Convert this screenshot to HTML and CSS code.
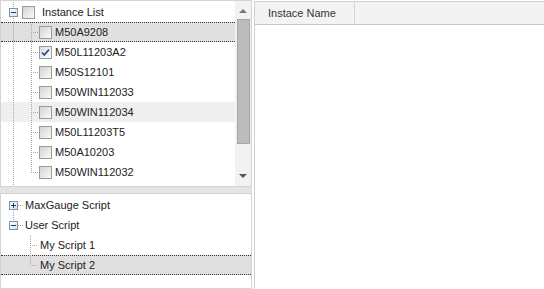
FILE: index.html
```html
<!DOCTYPE html>
<html lang="en">
<head>
    <meta charset="UTF-8">
    <title>Instance List</title>
    <link rel="stylesheet" href="styles.css">
</head>
<body>
    <div class="layout">
        <div class="left">
            <div class="tree-top">
                <div class="tree-rows">
                    <div class="row root">
                        <span class="col0 line-full"><span class="expander minus"></span></span>
                        <span class="check"></span>
                        <span class="label">Instance List</span>
                    </div>
                    <div class="row child selected">
                        <span class="col0 line-full"></span>
                        <span class="col1 elbow"></span>
                        <span class="check"></span>
                        <span class="label">M50A9208</span>
                    </div>
                    <div class="row child">
                        <span class="col0 line-full"></span>
                        <span class="col1 elbow"></span>
                        <span class="check checked"><svg width="11" height="11" viewBox="0 0 11 11"><path d="M2 5.5 L4.3 8 L9 2.5" fill="none" stroke="#2b4a9c" stroke-width="1.8"/></svg></span>
                        <span class="label">M50L11203A2</span>
                    </div>
                    <div class="row child">
                        <span class="col0 line-full"></span>
                        <span class="col1 elbow"></span>
                        <span class="check"></span>
                        <span class="label">M50S12101</span>
                    </div>
                    <div class="row child">
                        <span class="col0 line-full"></span>
                        <span class="col1 elbow"></span>
                        <span class="check"></span>
                        <span class="label">M50WIN112033</span>
                    </div>
                    <div class="row child hover">
                        <span class="col0 line-full"></span>
                        <span class="col1 elbow"></span>
                        <span class="check"></span>
                        <span class="label">M50WIN112034</span>
                    </div>
                    <div class="row child">
                        <span class="col0 line-full"></span>
                        <span class="col1 elbow"></span>
                        <span class="check"></span>
                        <span class="label">M50L11203T5</span>
                    </div>
                    <div class="row child">
                        <span class="col0 line-full"></span>
                        <span class="col1 elbow"></span>
                        <span class="check"></span>
                        <span class="label">M50A10203</span>
                    </div>
                    <div class="row child">
                        <span class="col0 line-full"></span>
                        <span class="col1 elbow end"></span>
                        <span class="check"></span>
                        <span class="label">M50WIN112032</span>
                    </div>
                    <div class="tree-fill"><span class="col0 line-full"></span></div>
                </div>
                <div class="scrollbar">
                    <span class="arrow up"></span>
                    <span class="thumb"></span>
                    <span class="arrow down"></span>
                </div>
            </div>
            <div class="splitter"></div>
            <div class="tree-bottom">
                <div class="row">
                    <span class="col0 line-lower"><span class="expander plus"></span></span>
                    <span class="label">MaxGauge Script</span>
                </div>
                <div class="row">
                    <span class="col0 line-upper"><span class="expander minus"></span></span>
                    <span class="label">User Script</span>
                </div>
                <div class="row script">
                    <span class="col0"></span>
                    <span class="col1 elbow"></span>
                    <span class="label">My Script 1</span>
                </div>
                <div class="row script selected">
                    <span class="col0"></span>
                    <span class="col1 elbow end"></span>
                    <span class="label">My Script 2</span>
                </div>
            </div>
        </div>
        <div class="right">
            <div class="grid-header">
                <div class="grid-col">Instace Name</div>
            </div>
        </div>
    </div>
</body>
</html>
```

FILE: styles.css
```css
body {
    margin: 0;
    background: #fff;
    font-family: "Liberation Sans", Arial, sans-serif;
    font-size: 11px;
    color: #222;
}
.layout {
    display: flex;
    height: 289px;
}
.left {
    width: 252px;
    display: flex;
    flex-direction: column;
}
.tree-top {
    height: 185px;
    border: 1px solid #d4d4d4;
    display: flex;
    overflow: hidden;
}
.tree-rows {
    flex: 1;
    padding-top: 1px;
    display: flex;
    flex-direction: column;
}
.tree-fill {
    flex: 1;
    display: flex;
}
.row {
    height: 20px;
    display: flex;
    align-items: center;
    box-sizing: border-box;
}
.row.selected {
    background: #e0e0e0;
    border-top: 1px dotted #333;
    border-bottom: 1px dotted #333;
}
.row.hover {
    background: #efefef;
}

/* tree lines */
.col0, .col1 {
    position: relative;
    align-self: stretch;
    flex: none;
}
.col0 { width: 21px; }
.col1 { width: 16px; }
.line-full, .line-upper, .line-lower, .elbow {
    background-repeat: no-repeat;
}
.line-full {
    background-image: repeating-linear-gradient(to bottom, #a8a8a8 0 1px, transparent 1px 2px);
    background-size: 1px 100%;
    background-position: 12px 0;
}
.selected .line-full, .selected .elbow {
    margin: -1px 0;
}
.line-lower {
    background-image: repeating-linear-gradient(to bottom, #a8a8a8 0 1px, transparent 1px 2px);
    background-size: 1px 50%;
    background-position: 12px 100%;
}
.line-upper {
    background-image: repeating-linear-gradient(to bottom, #a8a8a8 0 1px, transparent 1px 2px);
    background-size: 1px 50%;
    background-position: 12px 0;
}
.elbow {
    background-image:
        repeating-linear-gradient(to bottom, #a8a8a8 0 1px, transparent 1px 2px),
        repeating-linear-gradient(to right, #a8a8a8 0 1px, transparent 1px 2px);
    background-size: 1px 100%, 7px 1px;
    background-position: 9px 0, 9px 10px;
}
.elbow.end {
    background-size: 1px 10px, 7px 1px;
}
.script .col1 {
    width: 18px;
}
.script .elbow {
    background-position: 8px 0, 8px 10px;
}

.expander {
    position: absolute;
    left: 8px;
    top: 6px;
    width: 7px;
    height: 7px;
    border: 1px solid #7d93ae;
    background: linear-gradient(135deg, #ffffff, #d6dfea);
}
.expander::before {
    content: "";
    position: absolute;
    left: 1px;
    top: 3px;
    width: 5px;
    height: 1px;
    background: #1f3b6b;
}
.expander.plus::after {
    content: "";
    position: absolute;
    left: 3px;
    top: 1px;
    width: 1px;
    height: 5px;
    background: #1f3b6b;
}
.tree-bottom .col0 {
    width: 24px;
    background-image:
        repeating-linear-gradient(to bottom, #a8a8a8 0 1px, transparent 1px 2px),
        repeating-linear-gradient(to right, #a8a8a8 0 1px, transparent 1px 2px);
    background-repeat: no-repeat;
}
.tree-bottom .line-lower {
    background-size: 1px 50%, 5px 1px;
    background-position: 12px 100%, 17px 10px;
}
.tree-bottom .line-upper {
    background-size: 1px 50%, 5px 1px;
    background-position: 12px 0, 17px 10px;
}
.tree-bottom .script .col0 {
    width: 21px;
    background-image: none;
}

.check {
    width: 11px;
    height: 11px;
    border: 1px solid #9a9a9a;
    background: linear-gradient(135deg, #d2d2d2, #fbfbfb);
    flex: none;
    display: flex;
}
.root .check {
    margin-right: 7px;
}
.child .check {
    margin-right: 3px;
}
.child .col1 {
    width: 17px;
}
.check.checked {
    background: linear-gradient(135deg, #dcdcdc, #ffffff);
}
.label {
    white-space: nowrap;
}

.scrollbar {
    width: 16px;
    background: #f2f2f2;
    display: flex;
    flex-direction: column;
    align-items: center;
    flex: none;
}
.arrow {
    width: 0;
    height: 0;
    border-left: 4px solid transparent;
    border-right: 4px solid transparent;
}
.arrow.up {
    margin-top: 8px;
    border-bottom: 4px solid #777;
}
.arrow.down {
    margin-top: 30px;
    border-top: 4px solid #555;
}
.thumb {
    margin-top: 6px;
    width: 11px;
    height: 123px;
    background: #bcbcbc;
    border: 1px solid #a6a6a6;
}

.splitter {
    height: 6px;
    background: #e4e4e4;
    border-bottom: 1px solid #d0d0d0;
}
.tree-bottom {
    flex: 1;
    border: 1px solid #d4d4d4;
    border-top: none;
    padding-top: 1px;
}

.right {
    flex: 1;
    margin-left: 2px;
    margin-top: 1px;
    border-left: 1px solid #cfcfcf;
}
.grid-header {
    height: 22px;
    background: #f3f3f3;
    border-top: 1px solid #d0d0d0;
    border-bottom: 1px solid #c5c5c5;
    display: flex;
}
.grid-col {
    width: 86px;
    padding-left: 13px;
    border-right: 1px solid #d8d8d8;
    line-height: 22px;
    color: #333;
}
```
